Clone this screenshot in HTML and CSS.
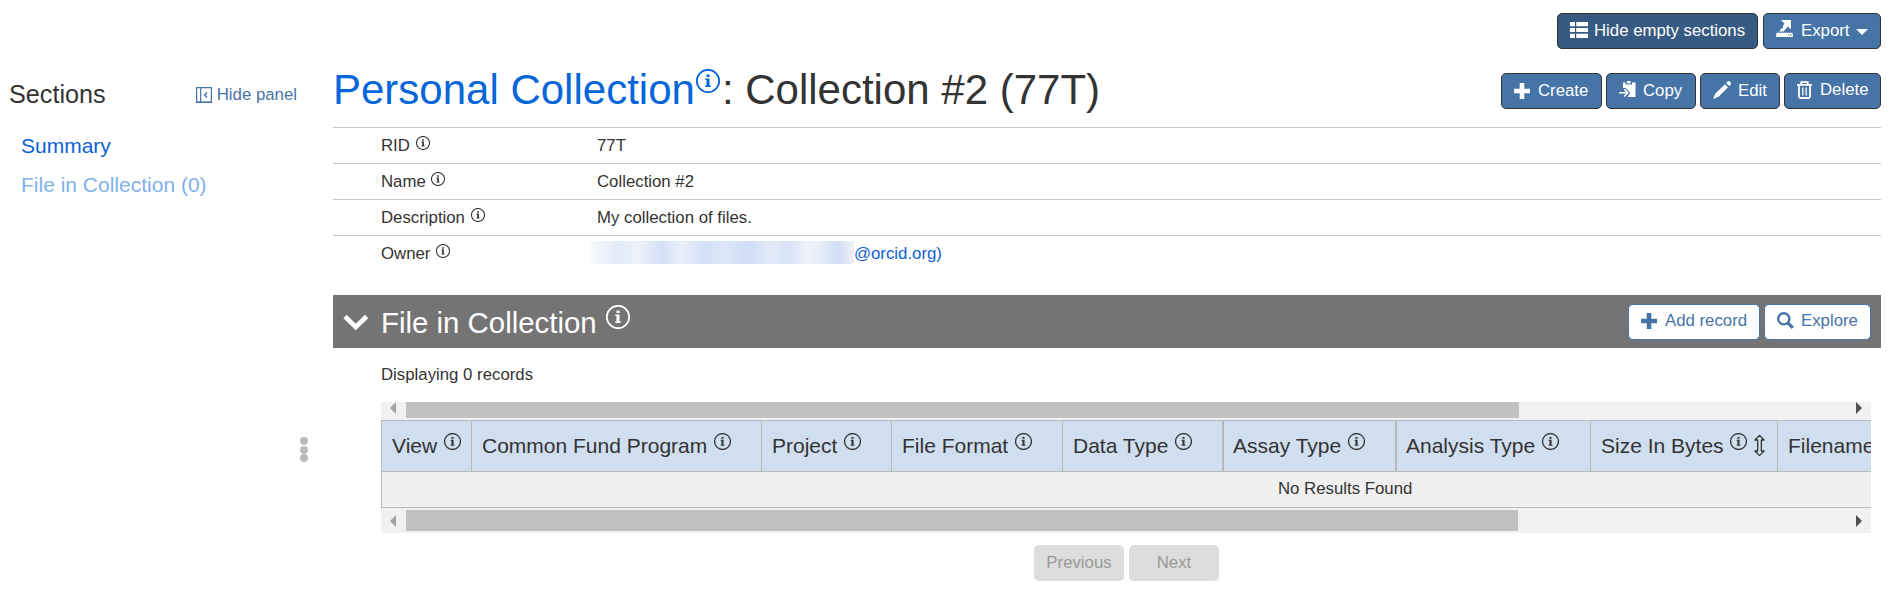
FILE: index.html
```
<!DOCTYPE html>
<html lang="en">
<head>
<meta charset="utf-8">
<title>Personal Collection: Collection #2 (77T)</title>
<link rel="stylesheet" href="styles.css">
</head>
<body>
<svg class="sprite" aria-hidden="true">
  <symbol id="info" viewBox="0 0 24 24"><circle cx="12" cy="12" r="11.2" fill="none" stroke="currentColor" stroke-width="1.8"/><path fill="currentColor" d="M10.5 5.500h3v2.600h-3zM9.300 9.600h4.200v7h1.300v1.500H9.300v-1.500h1.200v-5.500H9.300z"/></symbol>
  <symbol id="plus" viewBox="0 0 16 16"><path fill="currentColor" d="M5.700 0h4.600v5.700H16v4.600h-5.700V16H5.700v-5.700H0V5.700h5.700z"/></symbol>
</svg>
<div class="page">
  <aside class="side">
    <div class="side-head">
      <h2 class="side-title">Sections</h2>
      <a class="hide-panel"><svg class="i-panel" viewBox="0 0 16 16"><path fill="none" stroke="currentColor" stroke-width="1.2" d="M.6.6h14.800v14.800H.6zM4.700.6v14.800"/><path fill="none" stroke="currentColor" stroke-width="1.500" d="M11 5.400 8.700 8l2.300 2.600M0 15.200h16"/></svg>Hide panel</a>
    </div>
    <nav class="toc">
      <a class="toc-item">Summary</a>
      <a class="toc-item toc-empty">File in Collection (0)</a>
    </nav>
  </aside>
  <div class="divider"><i class="dot"></i><i class="dot"></i><i class="dot"></i></div>
  <main class="main">
    <div class="toolbar">
      <button class="btn btn-active b-hide"><svg class="i-list" viewBox="0 0 18 16"><path fill="currentColor" d="M0 0h5v4.200H0zM6.200 0H18v4.200H6.200zM0 5.900h5v4.200H0zM6.200 5.900H18v4.200H6.200zM0 11.800h5V16H0zM6.200 11.800H18V16H6.200z"/></svg>Hide empty sections</button>
      <button class="btn b-export"><svg class="i-export" viewBox="0 0 17 17"><path fill="currentColor" d="M5 0h10v9.500l-3-3-4.500 5H3.200L8.500 3.400zM.5 12.800h16L17 17H0z"/><path fill="#4674a7" d="M4.800 6h2.200v2.200H4.800zM12 14.300h1.200v1.200H12zM14.300 14.300h1.200v1.200h-1.200z"/></svg>Export<i class="caret"></i></button>
    </div>
    <header class="title-row">
      <h1 class="title"><a class="title-link">Personal Collection<svg class="info info-title"><use href="#info"/></svg></a>: Collection #2 (77T)</h1>
      <div class="actions">
        <button class="btn b-create"><svg class="i-plus"><use href="#plus"/></svg>Create</button>
        <button class="btn b-copy"><svg class="i-copy" viewBox="0 0 17 17"><path fill="currentColor" d="M4 1.500h2.500v2h6.500v-2h3.500V16H8.500l2.800-4.200L6.500 7H4z"/><path fill="currentColor" d="M8 0h3.600v2.400H8z"/><path fill="none" stroke="currentColor" stroke-width="1.500" d="M0 11.800h8.200M5.200 8.300l3.600 3.500-3.600 3.700"/></svg>Copy</button>
        <button class="btn b-edit"><svg class="i-pen" viewBox="0 0 18 18"><path fill="currentColor" d="m12 3.200 3 3L5.600 15.700 0 18l2.400-5.400zM13.100 2 14.500.6a1.600 1.600 0 0 1 2.200 0l.9.9a1.600 1.600 0 0 1 0 2.200L16.200 5z"/></svg>Edit</button>
        <button class="btn b-delete"><svg class="i-trash" viewBox="0 0 15 18"><path fill="none" stroke="currentColor" stroke-width="1.800" d="M0 3.900h15M4.300 3.500V1.100h6.400v2.400M2 4v11.500q0 1.500 1.500 1.500h8q1.500 0 1.500-1.500V4"/><path stroke="currentColor" stroke-width="1.300" d="M5.800 6.500v8M9.200 6.500v8"/></svg>Delete</button>
      </div>
    </header>
    <dl class="fields">
      <div class="field"><dt class="key">RID <svg class="info info-sm"><use href="#info"/></svg></dt><dd class="val">77T</dd></div>
      <div class="field"><dt class="key">Name <svg class="info info-sm"><use href="#info"/></svg></dt><dd class="val">Collection #2</dd></div>
      <div class="field"><dt class="key">Description <svg class="info info-sm"><use href="#info"/></svg></dt><dd class="val">My collection of files.</dd></div>
      <div class="field"><dt class="key">Owner <svg class="info info-sm"><use href="#info"/></svg></dt><dd class="val owner"><span class="redacted"></span><a class="link">@orcid.org)</a></dd></div>
    </dl>
    <section>
      <div class="bar">
        <svg class="i-chev" viewBox="0 0 26 17"><path fill="none" stroke="currentColor" stroke-width="4.600" d="M2 2.500 12.800 13 23.600 2.500"/></svg>
        <h2 class="bar-title">File in Collection <svg class="info info-bar"><use href="#info"/></svg></h2>
        <div class="bar-actions">
          <button class="btn btn-light b-add"><svg class="i-plus"><use href="#plus"/></svg>Add record</button>
          <button class="btn btn-light b-explore"><svg class="i-search" viewBox="0 0 17 17"><circle cx="6.800" cy="6.800" r="5.600" fill="none" stroke="currentColor" stroke-width="2.400"/><path stroke="currentColor" stroke-width="3.200" d="m10.800 10.800 5 5"/></svg>Explore</button>
        </div>
      </div>
      <div class="content">
        <p class="count">Displaying 0 records</p>
        <div class="scroll scroll-top"><i class="arrow arrow-l"></i><i class="thumb"></i><i class="arrow arrow-r"></i></div>
        <div class="thead">
          <div class="th">View <svg class="info info-th"><use href="#info"/></svg></div>
          <div class="th">Common Fund Program <svg class="info info-th"><use href="#info"/></svg></div>
          <div class="th">Project <svg class="info info-th"><use href="#info"/></svg></div>
          <div class="th">File Format <svg class="info info-th"><use href="#info"/></svg></div>
          <div class="th">Data Type <svg class="info info-th"><use href="#info"/></svg></div>
          <div class="th th-thick">Assay Type <svg class="info info-th"><use href="#info"/></svg></div>
          <div class="th th-thick">Analysis Type <svg class="info info-th"><use href="#info"/></svg></div>
          <div class="th">Size In Bytes <svg class="info info-th"><use href="#info"/></svg><svg class="i-sort" viewBox="0 0 12 24"><path fill="none" stroke="currentColor" stroke-width="1.400" stroke-linejoin="round" d="M6 1 1 6h3v12H1l5 5 5-5H8V6h3z"/></svg></div>
          <div class="th">Filename</div>
        </div>
        <div class="empty">No Results Found</div>
        <div class="scroll scroll-bottom"><i class="arrow arrow-l"></i><i class="thumb"></i><i class="arrow arrow-r"></i></div>
        <div class="pager"><button class="page-btn">Previous</button><button class="page-btn">Next</button></div>
      </div>
    </section>
  </main>
</div>
</body>
</html>
```
FILE: styles.css
```
* { box-sizing: border-box; }
body { margin: 0; height: 608px; overflow: hidden; background: #fff; color: #333; font: 16.8px/24px "Liberation Sans", Arial, sans-serif; }
h1, h2, p, dl, dd { margin: 0; font-weight: 400; }
button { font: inherit; margin: 0; }
svg { flex: none; }
.sprite { display: none; }
.page { display: flex; height: 608px; }
.side { width: 298px; padding: 80px 0 0 9px; }
.side-head { display: flex; justify-content: space-between; align-items: center; height: 28px; padding-right: 1px; }
.side-title { font-size: 25.2px; line-height: 28px; }
.hide-panel { display: flex; align-items: center; color: #4674a7; line-height: 28px; padding-top: 1px; }
.i-panel { width: 16px; height: 16px; margin-right: 5px; }
.toc { padding: 18px 0 0 12px; }
.toc-item { display: block; font-size: 21px; line-height: 39px; color: #0d61d3; }
.toc-empty { color: #7fb1ec; }
.divider { width: 35px; padding: 437px 0 0 2px; display: flex; flex-direction: column; gap: 0.6px; }
.dot { width: 8px; height: 8px; border-radius: 50%; background: #bbb; }
.main { width: 1548px; }
.toolbar { display: flex; justify-content: flex-end; gap: 5px; padding-top: 13px; }
.btn { display: flex; align-items: center; height: 36px; padding: 0 0 0 12px; white-space: nowrap; border: 1px solid #333; border-radius: 5px; background: #4674a7; color: #fff; line-height: 34px; }
.btn-active { background: #375a82; }
.btn-light { background: #fff; border-color: #4674a7; color: #4674a7; padding-left: 12px; padding-bottom: 2px; }
.b-hide { width: 201px; }
.b-export { width: 118px; }
.b-create { width: 101px; }
.b-copy { width: 90px; }
.b-edit { width: 80px; }
.b-delete { width: 97px; padding-bottom: 2px; }
.b-add { width: 132px; }
.b-explore { width: 107px; }
.i-list { width: 18px; height: 16px; margin: -2px 6px 0 0; }
.i-export { width: 17px; height: 17px; margin: -5px 8px 0 0; }
.caret { margin: 2px 0 0 6px; border: 6px solid transparent; border-top-color: #fff; border-bottom: 0; }
.i-plus { width: 16px; height: 16px; margin: -1px 8px 0 0; }
.i-copy { width: 17px; height: 17px; margin: -3px 7px 0 0; }
.i-pen { width: 18px; height: 18px; margin: -3px 7px 0 0; }
.i-trash { width: 15px; height: 18px; margin: 0 8px 0 0; }
.i-search { width: 17px; height: 17px; margin: -2px 7px 0 0; }
.title-row { display: flex; justify-content: space-between; padding-top: 17px; height: 78px; }
.title { font-size: 42px; line-height: 48px; white-space: nowrap; }
.title-link, .link { color: #0d61d3; }
.title-link { color: #0566d9; }
.info { display: inline-block; overflow: visible; }
.info-title { width: 24px; height: 24px; margin: 0 2px 0 1px; vertical-align: 11px; }
.actions { display: flex; gap: 4px; padding-top: 7px; }
.field { display: flex; height: 36px; padding-left: 48px; border-top: 1px solid #c8c8c8; line-height: 36px; }
.key { width: 216px; }
.info-sm { width: 14px; height: 14px; margin-left: 1px; vertical-align: 1px; }
.owner { display: flex; }
.redacted { width: 263px; height: 23px; margin: 5px 0 0 -6px; background: linear-gradient(90deg, #f7f9fd, #e3ebf9 10%, #edf2fb 18%, #d3e0f6 27%, #eaf0fa 34%, #d3e0f6 43%, #dce7f8 51%, #cfdef5 60%, #e1eaf8 68%, #d7e3f7 75%, #edf2fb 82%, #e8effa 87%, #cfdef5 94%, #f0f0f8); }
.link { line-height: 35px; }
.bar { display: flex; height: 53px; margin-top: 24px; padding-right: 10px; background: #747474; color: #fff; }
.fields { height: 144px; }
.i-chev { width: 26px; height: 17px; margin: 19px 12px 0 10px; }
.bar-title { font-size: 29.4px; line-height: 55px; }
.info-bar { width: 24px; height: 24px; margin-left: 1px; vertical-align: 4px; }
.bar-actions { display: flex; gap: 4px; margin: 9px 0 0 auto; }
.content { margin-left: 48px; width: 1490px; }
.count { padding-top: 15px; height: 54px; }
.scroll { display: flex; justify-content: space-between; background: #f1f1f1; }
.scroll-top { height: 18px; }
.scroll-bottom { height: 25px; padding-top: 2px; }
.arrow { width: 0; height: 0; border: 6px solid transparent; margin-top: 5px; }
.scroll-top .arrow { margin-top: 0; }
.arrow-l { border-right-color: #a3a3a3; border-left: 0; margin-left: 9px; }
.arrow-r { border-left-color: #505050; border-right: 0; margin-right: 9px; }
.thumb { width: 1113px; margin-right: auto; margin-left: 10px; height: 16px; background: #c1c1c1; }
.scroll-bottom .thumb { height: 21px; width: 1112px; }
.thead { display: grid; grid-template-columns: 90px 290px 130px 171px 160px 173px 195px 187px 94px; height: 51px; overflow: hidden; background: #d0dff0; border-top: 1px solid #b8b8b8; }
.th { padding-left: 10px; border-left: 1px solid #b8b8b8; font-size: 21px; line-height: 50px; white-space: nowrap; overflow: hidden; }
.th-thick { border-left-width: 2px; padding-left: 9px; }
.info-th { width: 17px; height: 17px; margin-left: 1px; vertical-align: 3px; }
.i-sort { width: 11px; height: 23px; margin-left: 7px; vertical-align: -4px; }
.empty { height: 37px; border: 1px solid #b8b8b8; border-right: 0; background: #f0f0f0; line-height: 34px; padding-left: 896px; }
.pager { display: flex; gap: 5px; padding: 12px 0 0 653px; }
.page-btn { width: 90px; height: 36px; padding: 0 0 1px; border: 0; border-radius: 5px; background: #ddd; color: #999; }
```
